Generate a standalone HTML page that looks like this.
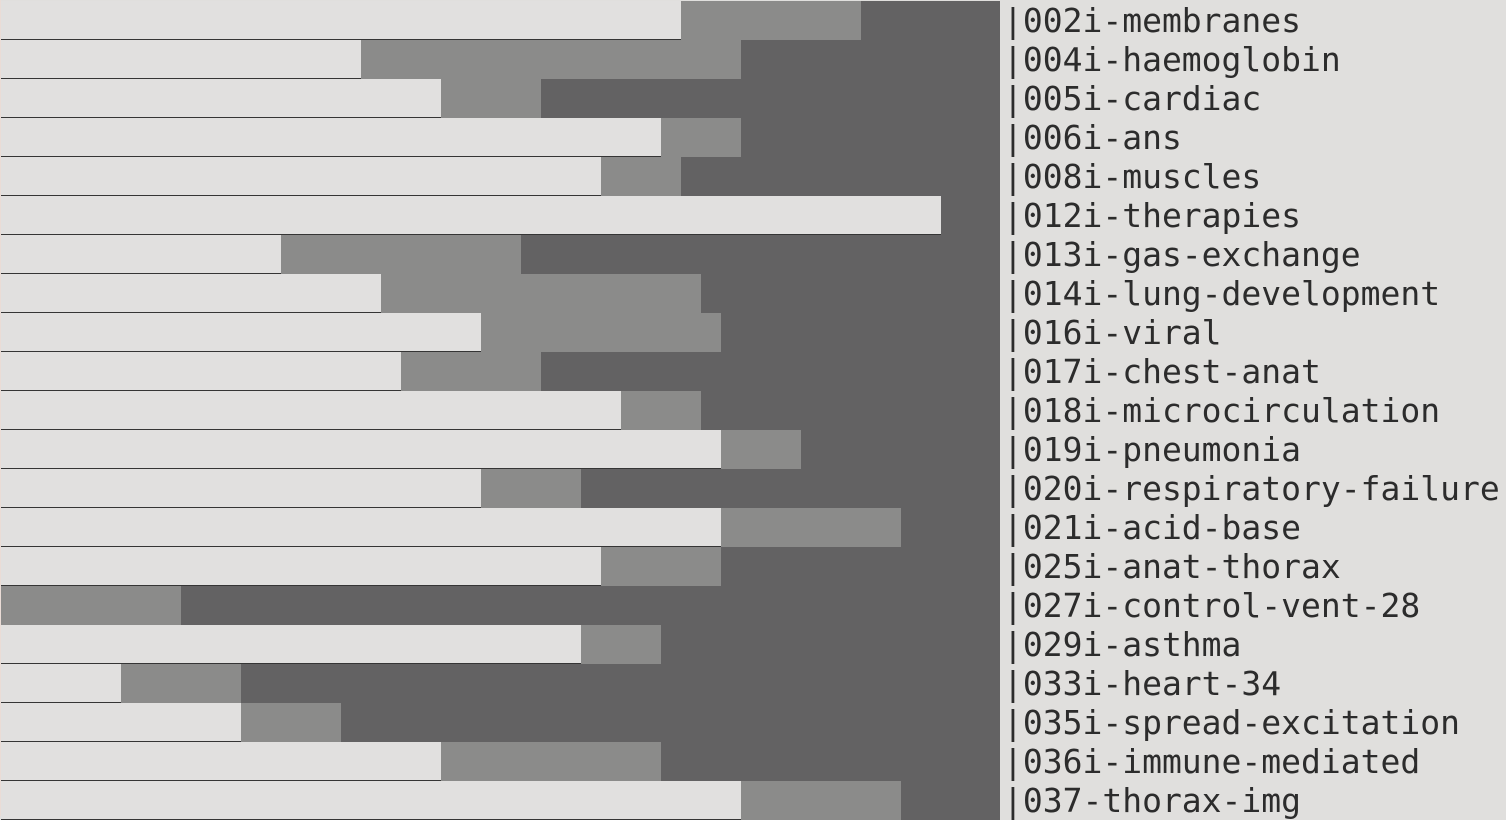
<!DOCTYPE html>
<html><head><style>
body{margin:0;width:1506px;height:816px;overflow:hidden;background:#e0dfdd;position:relative;font-family:"DejaVu Sans Mono","Liberation Mono",monospace;}
.r{position:absolute;left:1px;height:39px;width:999px;background:#636263}
.l{position:absolute;left:0;top:0;height:38px;background:#e1e0df;border-bottom:1px solid #353535}
.m{position:absolute;top:0;height:39px;background:#8b8b8a}
.t{position:absolute;left:1003px;height:39px;line-height:39px;font-size:33px;color:#2c2c2c;white-space:pre}
.edge{position:absolute;left:0;top:0;width:1px;height:816px;background:#eadcd6}
</style></head><body>
<div class="r" style="top:1px"><div class="m" style="left:680px;width:180px"></div><div class="l" style="width:680px"></div></div>
<div class="r" style="top:40px"><div class="m" style="left:360px;width:380px"></div><div class="l" style="width:360px"></div></div>
<div class="r" style="top:79px"><div class="m" style="left:440px;width:100px"></div><div class="l" style="width:440px"></div></div>
<div class="r" style="top:118px"><div class="m" style="left:660px;width:80px"></div><div class="l" style="width:660px"></div></div>
<div class="r" style="top:157px"><div class="m" style="left:600px;width:80px"></div><div class="l" style="width:600px"></div></div>
<div class="r" style="top:196px"><div class="l" style="width:940px"></div></div>
<div class="r" style="top:235px"><div class="m" style="left:280px;width:240px"></div><div class="l" style="width:280px"></div></div>
<div class="r" style="top:274px"><div class="m" style="left:380px;width:320px"></div><div class="l" style="width:380px"></div></div>
<div class="r" style="top:313px"><div class="m" style="left:480px;width:240px"></div><div class="l" style="width:480px"></div></div>
<div class="r" style="top:352px"><div class="m" style="left:400px;width:140px"></div><div class="l" style="width:400px"></div></div>
<div class="r" style="top:391px"><div class="m" style="left:620px;width:80px"></div><div class="l" style="width:620px"></div></div>
<div class="r" style="top:430px"><div class="m" style="left:720px;width:80px"></div><div class="l" style="width:720px"></div></div>
<div class="r" style="top:469px"><div class="m" style="left:480px;width:100px"></div><div class="l" style="width:480px"></div></div>
<div class="r" style="top:508px"><div class="m" style="left:720px;width:180px"></div><div class="l" style="width:720px"></div></div>
<div class="r" style="top:547px"><div class="m" style="left:600px;width:120px"></div><div class="l" style="width:600px"></div></div>
<div class="r" style="top:586px"><div class="m" style="left:0px;width:180px"></div></div>
<div class="r" style="top:625px"><div class="m" style="left:580px;width:80px"></div><div class="l" style="width:580px"></div></div>
<div class="r" style="top:664px"><div class="m" style="left:120px;width:120px"></div><div class="l" style="width:120px"></div></div>
<div class="r" style="top:703px"><div class="m" style="left:240px;width:100px"></div><div class="l" style="width:240px"></div></div>
<div class="r" style="top:742px"><div class="m" style="left:440px;width:220px"></div><div class="l" style="width:440px"></div></div>
<div class="r" style="top:781px"><div class="m" style="left:740px;width:160px"></div><div class="l" style="width:740px"></div></div>
<div class="edge"></div>
<div class="t" style="top:1px">|002i-membranes</div>
<div class="t" style="top:40px">|004i-haemoglobin</div>
<div class="t" style="top:79px">|005i-cardiac</div>
<div class="t" style="top:118px">|006i-ans</div>
<div class="t" style="top:157px">|008i-muscles</div>
<div class="t" style="top:196px">|012i-therapies</div>
<div class="t" style="top:235px">|013i-gas-exchange</div>
<div class="t" style="top:274px">|014i-lung-development</div>
<div class="t" style="top:313px">|016i-viral</div>
<div class="t" style="top:352px">|017i-chest-anat</div>
<div class="t" style="top:391px">|018i-microcirculation</div>
<div class="t" style="top:430px">|019i-pneumonia</div>
<div class="t" style="top:469px">|020i-respiratory-failure</div>
<div class="t" style="top:508px">|021i-acid-base</div>
<div class="t" style="top:547px">|025i-anat-thorax</div>
<div class="t" style="top:586px">|027i-control-vent-28</div>
<div class="t" style="top:625px">|029i-asthma</div>
<div class="t" style="top:664px">|033i-heart-34</div>
<div class="t" style="top:703px">|035i-spread-excitation</div>
<div class="t" style="top:742px">|036i-immune-mediated</div>
<div class="t" style="top:781px">|037-thorax-img</div>
</body></html>
